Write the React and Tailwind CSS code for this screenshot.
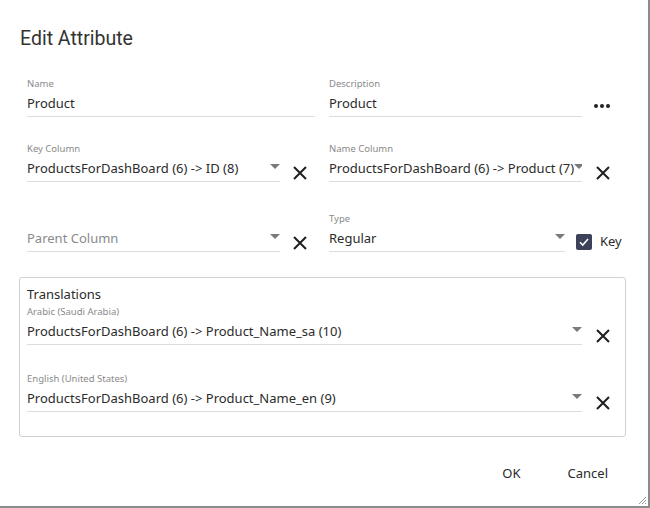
import React from "react";

const body = { fontFamily: '"Noto Sans", "Open Sans", sans-serif' };

const Arrow = () => (
    <svg width="10" height="6" viewBox="0 0 10 6" className="shrink-0 -mt-[4px]">
        <path d="M0 0 L10 0 L5 5 Z" fill="#7a7a7a" />
    </svg>
);

const Clear = () => (
    <button className="w-[16px] h-[16px] mt-[10px] shrink-0 flex items-center justify-center">
        <svg width="16" height="16" viewBox="0 0 16 16">
            <path d="M2 2 L14 14 M14 2 L2 14" stroke="#1f1f1f" strokeWidth="2" />
        </svg>
    </button>
);

const Field = ({label, value, placeholder, select, width}) => (
    <div className={width}>
        <div className="h-[14px] leading-[14px] text-[9.5px] text-[#8a8a8a]">{label}</div>
        <div className="h-[26px] pt-[1px] flex items-center justify-between border-b border-[#dcdcdc]">
            {value ? (
                <span className="text-[13px] text-[#2b2b2b] whitespace-nowrap">{value}</span>
            ) : (
                <span className="text-[13px] text-[#8a8a8a] whitespace-nowrap">{placeholder}</span>
            )}
            {select && <Arrow />}
        </div>
    </div>
);

const App = () => {
    return (
        <div style={body} className="w-[650px] h-[508px] bg-white border-r-2 border-b-2 border-[#8c8c8c] relative">
            <h1
                style={{fontFamily: 'Roboto, "Liberation Sans", sans-serif'}}
                className="pl-[20px] pt-[27px] text-[19.5px] leading-[24px] text-[#333] font-normal"
            >
                Edit Attribute
            </h1>

            <div className="pl-[27px] pt-[26px]">
                {/* row 1 */}
                <div className="flex">
                    <Field label="Name" value="Product" width="w-[288px]" />
                    <div className="ml-[14px] flex">
                        <Field label="Description" value="Product" width="w-[253px]" />
                        <div className="ml-[12px] mt-[27px] flex gap-[2px]">
                            <span className="w-[4px] h-[4px] rounded-full bg-[#222]" />
                            <span className="w-[4px] h-[4px] rounded-full bg-[#222]" />
                            <span className="w-[4px] h-[4px] rounded-full bg-[#222]" />
                        </div>
                    </div>
                </div>

                {/* row 2 */}
                <div className="flex mt-[25px]">
                    <div className="w-[288px] flex items-start">
                        <Field label="Key Column" value="ProductsForDashBoard (6) -> ID (8)" select width="w-[253px]" />
                        <div className="ml-[12px] mt-[13px]"><Clear /></div>
                    </div>
                    <div className="ml-[14px] flex items-start">
                        <Field label="Name Column" value="ProductsForDashBoard (6) -> Product (7)" select width="w-[253px] overflow-hidden" />
                        <div className="ml-[13px] mt-[13px]"><Clear /></div>
                    </div>
                </div>

                {/* row 3 */}
                <div className="flex mt-[30px]">
                    <div className="w-[288px] flex items-start">
                        <Field label="" placeholder="Parent Column" select width="w-[253px]" />
                        <div className="ml-[12px] mt-[13px]"><Clear /></div>
                    </div>
                    <div className="ml-[14px] flex items-start">
                        <Field label="Type" value="Regular" select width="w-[236px]" />
                        <label className="ml-[11px] mt-[20px] flex items-center gap-[8px] text-[13px] text-[#2b2b2b]">
                            <span className="w-[16px] h-[16px] rounded-[2px] bg-[#3c4259] flex items-center justify-center">
                                <svg width="12" height="12" viewBox="0 0 12 12">
                                    <path d="M2 6.2 L4.8 9 L10 3" fill="none" stroke="#fff" strokeWidth="1.6" />
                                </svg>
                            </span>
                            Key
                        </label>
                    </div>
                </div>
            </div>

            {/* translations */}
            <div className="ml-[19px] mt-[25px] w-[607px] h-[160px] border border-[#d0d0d0] rounded-[3px] pl-[7px] pt-[7px]">
                <div className="text-[13px] leading-[18px] text-[#2b2b2b]">Translations</div>
                <div className="flex items-start mt-[2px]">
                    <Field label="Arabic (Saudi Arabia)" value="ProductsForDashBoard (6) -> Product_Name_sa (10)" select width="w-[555px]" />
                    <div className="ml-[13px] mt-[13px]"><Clear /></div>
                </div>
                <div className="flex items-start mt-[27px]">
                    <Field label="English (United States)" value="ProductsForDashBoard (6) -> Product_Name_en (9)" select width="w-[555px]" />
                    <div className="ml-[13px] mt-[13px]"><Clear /></div>
                </div>
            </div>

            {/* footer */}
            <div className="flex justify-end gap-[47px] pr-[40px] mt-[27px] text-[13px] text-[#2b2b2b]">
                <button>OK</button>
                <button>Cancel</button>
            </div>

            <svg width="10" height="10" viewBox="0 0 10 10" className="absolute right-[1px] bottom-[1px]">
                <path d="M9 2 L2 9 M9 5 L5 9 M9 8 L8 9" stroke="#9a9a9a" strokeWidth="1" />
            </svg>
        </div>
    );
};

export default App;
